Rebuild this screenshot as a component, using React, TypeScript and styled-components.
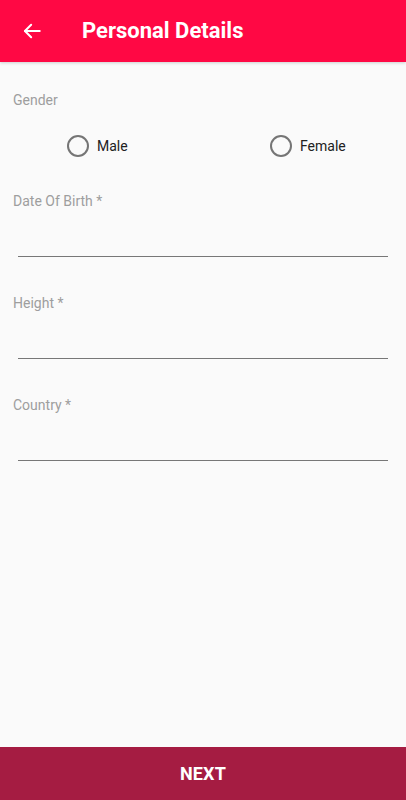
import React, { useState } from "react";
import styled, { createGlobalStyle } from "styled-components";

const Global = createGlobalStyle`
  html, body { margin: 0; padding: 0; background: #fafafa; }
  body { font-family: Roboto, "Noto Sans", Arial, sans-serif; }
  * { box-sizing: border-box; }
`;

const Page = styled.div`
  min-height: 100vh;
  display: flex;
  flex-direction: column;
  background: #fafafa;
`;

const Header = styled.header`
  height: 62px;
  background: #ff0844;
  display: flex;
  align-items: center;
  padding-left: 21px;
  box-shadow: 0 1px 3px rgba(0, 0, 0, 0.18);
`;

const BackButton = styled.button`
  border: 0;
  background: none;
  padding: 0;
  width: 22px;
  height: 22px;
  display: flex;
  align-items: center;
  justify-content: center;
  color: #fff;
  margin-right: 39px;
`;

const Title = styled.h1`
  margin: 0;
  color: #fff;
  font-size: 22px;
  font-weight: 700;
  line-height: 28px;
`;

const Content = styled.main`
  flex: 1;
  padding: 28px 0 0 0;
`;

const Label = styled.div`
  padding-left: 13px;
  font-size: 14px;
  line-height: 20px;
  color: #9e9e9e;
`;

const RadioRow = styled.div`
  display: grid;
  grid-template-columns: 1fr 1fr;
  height: 40px;
  margin-top: 16px;
`;

const RadioOption = styled.label`
  display: flex;
  align-items: center;
  padding-left: 67px;
  font-size: 14px;
  color: #212121;
  cursor: pointer;
`;

const Circle = styled.span<{ $checked: boolean }>`
  width: 22px;
  height: 22px;
  border-radius: 50%;
  border: 2px solid ${(p) => (p.$checked ? "#ff0844" : "#757575")};
  margin-right: 8px;
  display: flex;
  align-items: center;
  justify-content: center;
  &::after {
    content: "";
    width: 10px;
    height: 10px;
    border-radius: 50%;
    background: ${(p) => (p.$checked ? "#ff0844" : "transparent")};
  }
`;

const Field = styled.div<{ $first?: boolean }>`
  margin-top: ${(p) => (p.$first ? "25px" : "36px")};
`;

const Input = styled.input`
  display: block;
  width: calc(100% - 36px);
  margin: 0 18px;
  height: 46px;
  border: 0;
  border-bottom: 1px solid #777;
  background: transparent;
  font-family: inherit;
  font-size: 16px;
  outline: none;
`;

const NextButton = styled.button`
  height: 53px;
  width: 100%;
  border: 0;
  background: #a51c42;
  color: #fff;
  font-family: inherit;
  font-size: 18px;
  font-weight: 700;
  letter-spacing: 0.2px;
`;

export default function App() {
  const [gender, setGender] = useState<string | null>(null);
  return (
    <Page>
      <Global />
      <Header>
        <BackButton aria-label="Back">
          <svg width="20" height="20" viewBox="0 0 24 24" fill="none" stroke="#fff" strokeWidth="2.4" strokeLinecap="square">
            <path d="M21 12H4" />
            <path d="M11 4.5L3.5 12l7.5 7.5" strokeLinecap="round" strokeLinejoin="round" />
          </svg>
        </BackButton>
        <Title>Personal Details</Title>
      </Header>
      <Content>
        <Label>Gender</Label>
        <RadioRow>
          {["Male", "Female"].map((g) => (
            <RadioOption key={g} onClick={() => setGender(g)}>
              <Circle $checked={gender === g} />
              {g}
            </RadioOption>
          ))}
        </RadioRow>
        <Field $first>
          <Label>Date Of Birth *</Label>
          <Input />
        </Field>
        <Field>
          <Label>Height *</Label>
          <Input />
        </Field>
        <Field>
          <Label>Country *</Label>
          <Input />
        </Field>
      </Content>
      <NextButton>NEXT</NextButton>
    </Page>
  );
}
